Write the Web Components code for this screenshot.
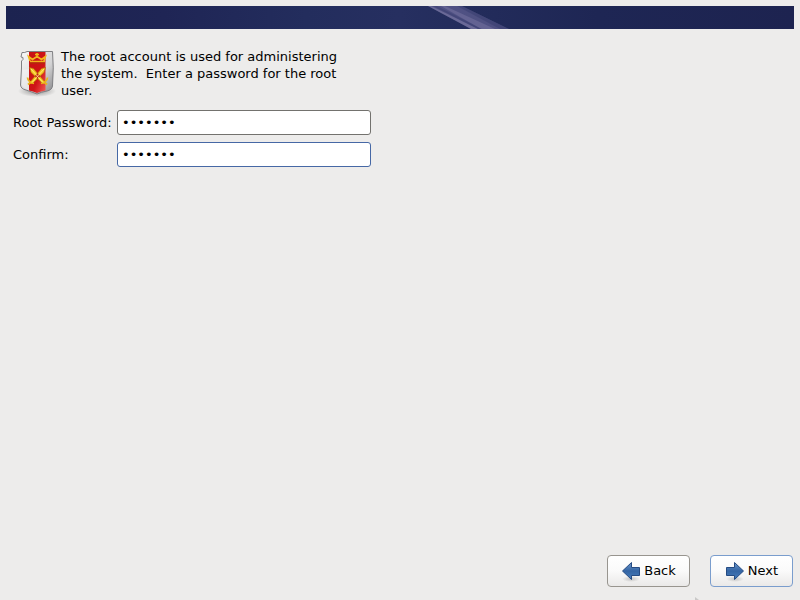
<!DOCTYPE html>
<html lang="en">
<head>
<meta charset="utf-8">
<title>Root Password</title>
<style>
  body {
    margin: 0;
    background: #edeceb;
    color: #000;
    font: 13px/17px "DejaVu Sans", sans-serif;
  }
</style>
</head>
<body>
<installer-screen>
  <root-intro>The root account is used for administering the system.&nbsp; Enter a password for the root user.</root-intro>
  <password-field label="Root Password:"></password-field>
  <password-field label="Confirm:" active></password-field>
  <nav-button slot="actions" direction="back">Back</nav-button>
  <nav-button slot="actions" direction="next" active>Next</nav-button>
</installer-screen>

<template id="screen-template">
  <style>
    :host {
      display: flex;
      flex-direction: column;
      box-sizing: border-box;
      min-height: 100vh;
      padding: 6px;
    }
    main {
      display: flex;
      flex-direction: column;
      gap: 7px;
      flex: 1;
      padding: 19px 7px;
    }
    footer {
      display: flex;
      justify-content: flex-end;
      gap: 20px;
      padding: 0 1px 7px 0;
    }
    .pointer {
      position: fixed;
      left: 695px;
      bottom: 0;
      width: 4px;
      height: 3px;
      background: #c9c8c7;
      clip-path: polygon(0 0, 100% 100%, 0 100%);
    }
  </style>
  <header-banner></header-banner>
  <main><slot></slot></main>
  <footer><slot name="actions"></slot></footer>
  <div class="pointer"></div>
</template>

<template id="banner-template">
  <style>
    :host {
      display: block;
      height: 23px;
      background: linear-gradient(90deg, #1c2350 0%, #1f2555 20%, #232d5d 38%, #262f60 50%, #222b5a 62%, #1e2654 75%, #1d2350 100%);
    }
    svg {
      display: block;
      width: 100%;
      height: 100%;
    }
  </style>
  <svg viewBox="0 0 788 23" preserveAspectRatio="xMidYMid slice" aria-hidden="true">
    <path d="M422 0H456L503 23H465Z" fill="#7c76aa" opacity=".5"/>
    <path d="M422 0H425L472 23H465Z" fill="#aaa2c7" opacity=".3"/>
    <path d="M435 0H439L489 23H475Z" fill="#a49cc5" opacity=".25"/>
    <path d="M427 0H431L476 23H472Z" fill="#2f3468" opacity=".35"/>
    <path d="M451 0H456L503 23H494Z" fill="#262f60" opacity=".3"/>
  </svg>
</template>

<template id="intro-template">
  <style>
    :host {
      display: flex;
      gap: 5px;
      padding: 0 0 4px 5px;
    }
    svg {
      flex: none;
      width: 38px;
      height: 50px;
    }
    p {
      margin: 0;
      max-width: 280px;
    }
  </style>
  <svg viewBox="0 0 38 50" aria-hidden="true">
    <defs>
      <linearGradient id="steel" x1="0" y1="0" x2="1" y2="1">
        <stop offset="0" stop-color="#fafafa"/>
        <stop offset=".6" stop-color="#d4d4d5"/>
        <stop offset="1" stop-color="#848487"/>
      </linearGradient>
      <linearGradient id="red" x1="0" y1="0" x2="1" y2="1">
        <stop offset="0" stop-color="#c81013"/>
        <stop offset=".6" stop-color="#cf1417"/>
        <stop offset="1" stop-color="#f45a55"/>
      </linearGradient>
      <radialGradient id="shade">
        <stop offset="0" stop-color="#555" stop-opacity=".6"/>
        <stop offset="1" stop-color="#555" stop-opacity="0"/>
      </radialGradient>
    </defs>
    <ellipse cx="19" cy="43" rx="19" ry="6" fill="url(#shade)"/>
    <path d="M4 4.500Q7 5 9 3.500L34.500 3.500Q36 19 34.500 38Q34 42 29 43Q23 44 19 46Q14 44 8 42Q3 41 2.500 37L3.500 20V13L5 11.500V9.500L3 9Z" fill="url(#steel)" stroke="#808083"/>
    <path d="M11 4H27.500V42.500Q23 43 19 45Q15 43 11 42.500Z" fill="url(#red)"/>
    <path d="M4.500 22L11 21V42Q4 40 4 36Z" fill="#fff" opacity=".35"/>
    <path d="M12 13.500H27M12 13L10.500 8.500L14.500 11.500L19 8.500L23.500 11.500L27.500 8.500L26 13M19 5V10M17 6.500H21" fill="none" stroke="#f2b51e" stroke-width="1.600"/>
    <path d="M12 15H27" stroke="#9d3c08" stroke-width=".8"/>
    <path d="M11.500 19.500L15.500 20.500L27 34L25 36L13 24.500ZM27.500 19.500L23.500 20.500L12 34L14 36L26 24.500Z" fill="#f5c422" stroke="#ad5a08" stroke-width=".6"/>
    <path d="M9.500 29.500Q10 34 16 35.500M29.500 29.500Q29 34 23 35.500M13 34L10 36.500M26 34L29 36.500" fill="none" stroke="#eab41c" stroke-width="1.800"/>
    <path d="M13 21L25 34.500M26 21L14 34.500" fill="none" stroke="#fff18a" stroke-width=".8"/>
  </svg>
  <p><slot></slot></p>
</template>

<template id="field-template">
  <style>
    :host {
      display: flex;
      align-items: center;
      gap: 6px;
    }
    label {
      flex: none;
      width: 98px;
      white-space: nowrap;
    }
    input {
      box-sizing: border-box;
      flex: 0 1 254px;
      min-width: 0;
      height: 25px;
      padding: 0 4px 1px;
      border: 1px solid #73726e;
      border-radius: 3px;
      outline: none;
      background: #fff;
      color: #000;
      font: inherit;
    }
    :host([active]) input {
      border-color: #4668a5;
    }
  </style>
  <label for="password"></label>
  <input id="password" type="password" value="changes">
</template>

<template id="button-template">
  <style>
    :host {
      display: block;
    }
    button {
      display: flex;
      align-items: center;
      justify-content: center;
      gap: 3px;
      box-sizing: border-box;
      min-width: 83px;
      height: 32px;
      padding: 0 12px 1px;
      border: 1px solid #98958f;
      border-radius: 4px;
      background: linear-gradient(#fff, #fafafa 50%, #eae9e8);
      color: inherit;
      font: inherit;
    }
    :host([active]) button {
      border-color: #7a9dcd;
    }
    svg {
      flex: none;
      width: 20px;
      height: 22px;
    }
    :host([direction="next"]) .arrow {
      transform: scaleX(-1);
      transform-origin: center;
    }
  </style>
  <button type="button">
    <svg viewBox="0 0 20 22" aria-hidden="true">
      <defs>
        <linearGradient id="blue" x1="0" y1="0" x2="0" y2="1">
          <stop offset="0" stop-color="#6a96cb"/>
          <stop offset=".5" stop-color="#3465a4"/>
          <stop offset="1" stop-color="#477dbc"/>
        </linearGradient>
        <radialGradient id="shadow">
          <stop offset="0" stop-color="#555" stop-opacity=".3"/>
          <stop offset="1" stop-color="#555" stop-opacity="0"/>
        </radialGradient>
      </defs>
      <ellipse cx="10" cy="19" rx="9" ry="3" fill="url(#shadow)"/>
      <path class="arrow" d="M1.500 11L10.500 2.500V7.500H18.500V15.500H10.500V19.500Z" fill="url(#blue)" stroke="#254b83" stroke-linejoin="round"/>
    </svg>
    <span><slot></slot></span>
  </button>
</template>

<script>
class TemplateElement extends HTMLElement {
  constructor() {
    super()
    const template = document.getElementById(this.constructor.templateId)
    this.attachShadow({ mode: 'open' })
      .appendChild(template.content.cloneNode(true))
  }
}

customElements.define('header-banner',
  class extends TemplateElement {
    static templateId = 'banner-template'
  }
)

customElements.define('root-intro',
  class extends TemplateElement {
    static templateId = 'intro-template'
  }
)

customElements.define('password-field',
  class extends TemplateElement {
    static templateId = 'field-template'

    connectedCallback() {
      this.shadowRoot.querySelector('label').textContent = this.getAttribute('label')
    }
  }
)

customElements.define('nav-button',
  class extends TemplateElement {
    static templateId = 'button-template'
  }
)

customElements.define('installer-screen',
  class extends TemplateElement {
    static templateId = 'screen-template'
  }
)
</script>
</body>
</html>
